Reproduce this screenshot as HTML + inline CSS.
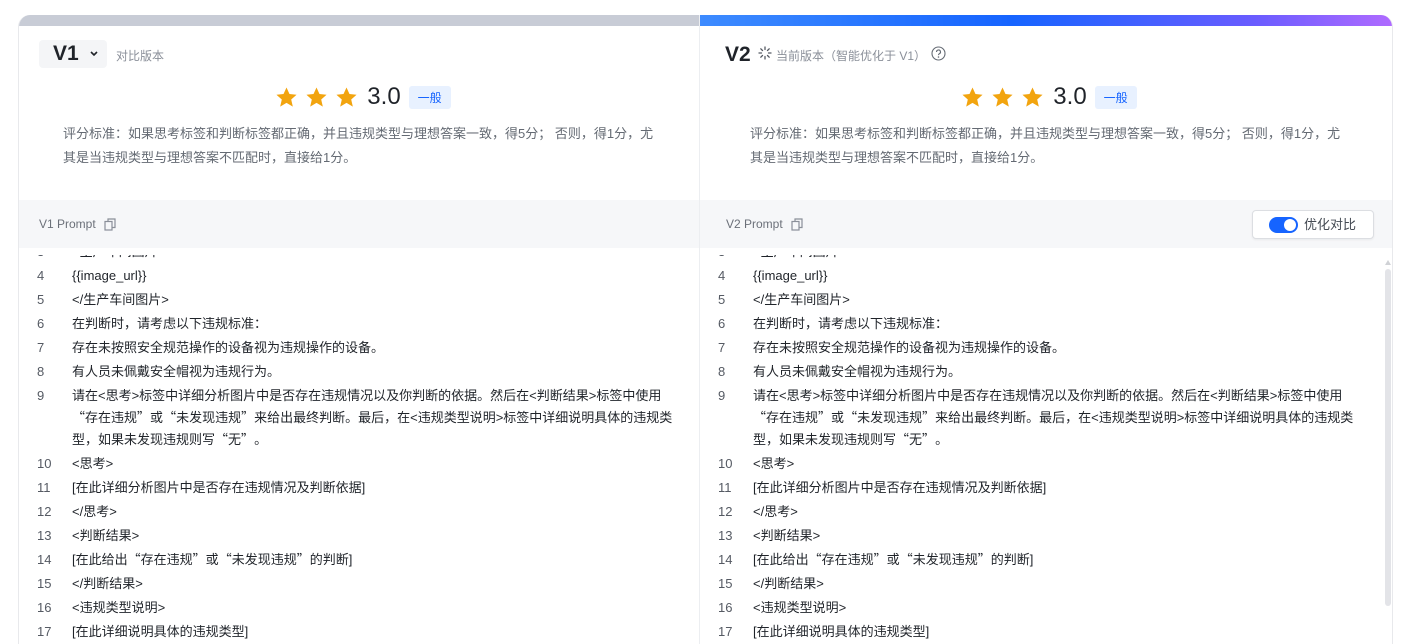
<!DOCTYPE html>
<html><head><meta charset="utf-8">
<style>
*{margin:0;padding:0;box-sizing:border-box}
html,body{width:1411px;height:644px;overflow:hidden}
body{background:#fff;font-family:"Liberation Sans","Noto Sans CJK SC",sans-serif;position:relative;color:#1f2329}
.card{position:absolute;left:18px;top:15px;width:1375px;height:629px;border-radius:12px 12px 0 0;overflow:hidden;border:1px solid #e8e9ec;border-top:none;border-bottom:none}
.bar{position:absolute;top:0;height:11px}
.panel{position:absolute;top:0;height:629px}
.p1{left:0;width:681px;border-right:1px solid #eceef1}
.p2{left:681px;width:694px}
.hdr{position:absolute;top:11px;left:0;right:0;height:174px}
.sel{position:absolute;left:20px;top:14px;width:68px;height:28px;background:#f4f5f7;border-radius:4px;font-size:21px;font-weight:600;line-height:28px;padding-left:14px}
.sub{font-size:12px;color:#8a8f99}
.rate{position:absolute;top:57px;left:0;right:0;text-align:center;height:28px}
.rate .in{display:inline-flex;align-items:center}
.star{width:23px;height:23px;margin-right:7px}
.score{font-size:24px;font-weight:500;color:#1f2329;margin-left:2px;margin-right:8px}
.tag{background:#e8f1ff;color:#1664ff;font-size:12px;padding:3px 9px;border-radius:3px}
.crit{position:absolute;top:96px;font-size:13px;color:#646a73;line-height:24px}
.pb{position:absolute;top:185px;left:0;right:0;height:48px;background:#f6f7f9;font-size:12px;color:#6b7079;line-height:48px;padding-left:20px}
.code{position:absolute;top:233px;left:0;right:0;bottom:0;overflow:hidden}
.rows{position:absolute;top:-8px;left:0;right:0}
.r{display:flex;font-size:13px;line-height:22px;height:24px;padding:1px 0;color:#1f2329}
.r.w{height:68px}
.n{flex:none;color:#555a63}
.q{font-family:"Noto Sans CJK SC",sans-serif;line-height:1;display:inline-block}
.cp{display:inline-block;vertical-align:middle;margin-left:8px}
.mask{position:absolute;top:0;left:0;right:0;height:7px;background:#fff}
</style></head><body>
<div class="card">
 <div class="bar" style="left:0;width:681px;background:#c8ccd6"></div>
 <div class="bar" style="left:681px;width:694px;background:linear-gradient(90deg,#3d8bff 0%,#1664ff 45%,#6a5cff 80%,#b06bff 100%)"></div>

 <div class="panel p1">
  <div class="hdr">
   <div class="sel">V1 <svg width="10" height="8" viewBox="0 0 10 8" style="margin-left:4px;vertical-align:2px"><path d="M2 2l3 3 3-3" stroke="#1f2329" stroke-width="1.6" fill="none"/></svg></div>
   <div class="sub" style="position:absolute;left:97px;top:21px">对比版本</div>
   <div class="rate"><div class="in" style="margin-left:8px">
    <svg class="star" viewBox="0 0 24 24"><path d="M12 1.5l3.1 6.9 7.4.7-5.6 5 1.7 7.4L12 17.6l-6.6 3.9 1.7-7.4-5.6-5 7.4-.7z" fill="#f2a40f"/></svg>
    <svg class="star" viewBox="0 0 24 24"><path d="M12 1.5l3.1 6.9 7.4.7-5.6 5 1.7 7.4L12 17.6l-6.6 3.9 1.7-7.4-5.6-5 7.4-.7z" fill="#f2a40f"/></svg>
    <svg class="star" viewBox="0 0 24 24"><path d="M12 1.5l3.1 6.9 7.4.7-5.6 5 1.7 7.4L12 17.6l-6.6 3.9 1.7-7.4-5.6-5 7.4-.7z" fill="#f2a40f"/></svg>
    <span class="score">3.0</span><span class="tag">一般</span></div></div>
   <div class="crit" style="left:44px">评分标准<span class="q">：</span>如果思考标签和判断标签都正确，并且违规类型与理想答案一致，得5分； 否则，得1分，尤<br>其是当违规类型与理想答案不匹配时，直接给1分。</div>
  </div>
  <div class="pb">V1 Prompt<svg class="cp" width="12" height="13" viewBox="0 0 12 13"><rect x="1" y="3.5" width="7" height="8.5" fill="none" stroke="#8a8f99" stroke-width="1.2"/><path d="M4 3.5V1h7v8.5H8" fill="none" stroke="#8a8f99" stroke-width="1.2"/></svg></div>
  <div class="code"><div class="rows" id="r1"></div><div class="mask"></div></div>
 </div>

 <div class="panel p2">
  <div class="hdr">
   <div style="position:absolute;left:25px;top:17px;font-size:21px;font-weight:600;line-height:24px">V2</div>
   <svg style="position:absolute;left:58px;top:20px" width="14" height="14" viewBox="0 0 14 14"><g stroke="#555a63" stroke-width="1.3" stroke-linecap="round"><path d="M7 1v2.5M7 10.5V13M1 7h2.5M10.5 7H13M2.8 2.8l1.7 1.7M9.5 9.5l1.7 1.7M2.8 11.2l1.7-1.7M9.5 4.5l1.7-1.7"/></g></svg>
   <div class="sub" style="position:absolute;left:76px;top:21px">当前版本（智能优化于 V1）</div>
   <svg style="position:absolute;left:231px;top:20px" width="15" height="15" viewBox="0 0 15 15"><circle cx="7.5" cy="7.5" r="6.5" fill="none" stroke="#646a73" stroke-width="1.1"/><path d="M5.5 6a2 2 0 1 1 2.8 1.8c-.6.3-.8.6-.8 1.3" fill="none" stroke="#646a73" stroke-width="1.1"/><circle cx="7.5" cy="11" r=".8" fill="#646a73"/></svg>
   <div class="rate"><div class="in" style="margin-left:4px">
    <svg class="star" viewBox="0 0 24 24"><path d="M12 1.5l3.1 6.9 7.4.7-5.6 5 1.7 7.4L12 17.6l-6.6 3.9 1.7-7.4-5.6-5 7.4-.7z" fill="#f2a40f"/></svg>
    <svg class="star" viewBox="0 0 24 24"><path d="M12 1.5l3.1 6.9 7.4.7-5.6 5 1.7 7.4L12 17.6l-6.6 3.9 1.7-7.4-5.6-5 7.4-.7z" fill="#f2a40f"/></svg>
    <svg class="star" viewBox="0 0 24 24"><path d="M12 1.5l3.1 6.9 7.4.7-5.6 5 1.7 7.4L12 17.6l-6.6 3.9 1.7-7.4-5.6-5 7.4-.7z" fill="#f2a40f"/></svg>
    <span class="score">3.0</span><span class="tag">一般</span></div></div>
   <div class="crit" style="left:50px">评分标准<span class="q">：</span>如果思考标签和判断标签都正确，并且违规类型与理想答案一致，得5分； 否则，得1分，尤<br>其是当违规类型与理想答案不匹配时，直接给1分。</div>
  </div>
  <div class="pb" style="padding-left:26px">V2 Prompt<svg class="cp" width="12" height="13" viewBox="0 0 12 13"><rect x="1" y="3.5" width="7" height="8.5" fill="none" stroke="#8a8f99" stroke-width="1.2"/><path d="M4 3.5V1h7v8.5H8" fill="none" stroke="#8a8f99" stroke-width="1.2"/></svg>
   <div style="position:absolute;left:552px;top:10px;width:122px;height:29px;border:1px solid #dcdee2;border-radius:4px;background:#fff;box-shadow:0 1px 2px rgba(0,0,0,.06);line-height:27px;font-size:13px;color:#444a53">
    <span style="position:absolute;left:16px;top:6px;width:29px;height:16px;border-radius:8px;background:#1664ff"><span style="position:absolute;right:2px;top:2px;width:12px;height:12px;border-radius:50%;background:#fff"></span></span>
    <span style="position:absolute;left:51px">优化对比</span></div>
  </div>
  <div class="code"><div class="rows" id="r2"></div><div class="mask"></div>
   <div style="position:absolute;left:685px;top:12px;width:0;height:0;border-left:3px solid transparent;border-right:3px solid transparent;border-bottom:5px solid #d0d2d6"></div>
   <div style="position:absolute;left:685px;top:21px;width:6px;height:337px;border-radius:3px;background:#e3e4e8"></div>
  </div>
 </div>
</div>
<script>
var L=[[3,"<生产车间图片>"],[4,"{{image_url}}"],[5,"</生产车间图片>"],[6,"在判断时，请考虑以下违规标准："],[7,"存在未按照安全规范操作的设备视为违规操作的设备。"],[8,"有人员未佩戴安全帽视为违规行为。"],[9,"请在<思考>标签中详细分析图片中是否存在违规情况以及你判断的依据。然后在<判断结果>标签中使用\n“存在违规”或“未发现违规”来给出最终判断。最后，在<违规类型说明>标签中详细说明具体的违规类\n型，如果未发现违规则写“无”。"],[10,"<思考>"],[11,"[在此详细分析图片中是否存在违规情况及判断依据]"],[12,"</思考>"],[13,"<判断结果>"],[14,"[在此给出“存在违规”或“未发现违规”的判断]"],[15,"</判断结果>"],[16,"<违规类型说明>"],[17,"[在此详细说明具体的违规类型]"],[18,"</违规类型说明>"]];
function esc(s){return s.replace(/&/g,"&amp;").replace(/</g,"&lt;").replace(/>/g,"&gt;").replace(/\n/g,"<br>").replace(/([“”：])/g,'<span class="q">$1</span>')}
function build(id,nl){var h="";L.forEach(function(x){h+='<div class="r'+(x[0]==9?' w':'')+'"><div class="n" style="width:53px;padding-left:'+nl+'px">'+x[0]+'</div><div class="t">'+esc(x[1])+'</div></div>'});document.getElementById(id).innerHTML=h}
build("r1",18);build("r2",18);
</script>
</body></html>
